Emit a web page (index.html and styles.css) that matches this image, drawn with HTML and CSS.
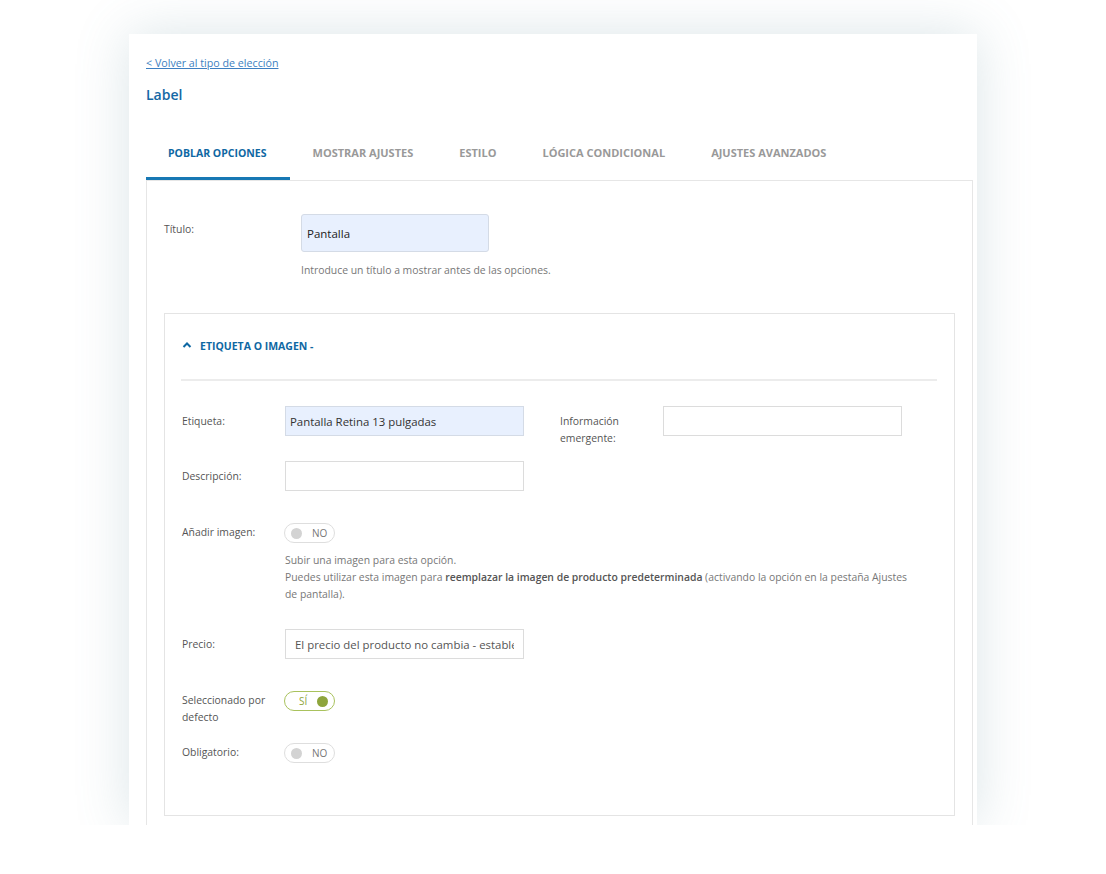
FILE: index.html
```html
<!DOCTYPE html>
<html lang="es">
<head>
    <meta charset="UTF-8">
    <title>Label | Poblar opciones</title>
    <link rel="stylesheet" href="styles.css">
</head>
<body>

<div class="page">
    <div class="card">
        <a class="back-link" href="#">&lt; Volver al tipo de elección</a>
        <h1 class="title">Label</h1>

        <div class="tabs">
            <a class="tab active" href="#">Poblar opciones</a>
            <a class="tab" href="#">Mostrar ajustes</a>
            <a class="tab" href="#">Estilo</a>
            <a class="tab" href="#">Lógica condicional</a>
            <a class="tab" href="#">Ajustes avanzados</a>
        </div>

        <div class="panel">
            <div class="title-row">
                <label class="title-label">Título:</label>
                <div>
                    <input class="title-input" type="text" value="Pantalla">
                    <p class="help">Introduce un título a mostrar antes de las opciones.</p>
                </div>
            </div>

            <div class="option">
                <div class="option-head">
                    <svg class="chevron" width="10" height="8" viewBox="0 0 10 8">
                        <polyline points="1.5,6 5,2.5 8.5,6" fill="none" stroke="#0f68a3" stroke-width="2"/>
                    </svg>
                    <span>Etiqueta o imagen -</span>
                </div>

                <div class="fields">
                    <div class="row first-row">
                        <label class="field-label">Etiqueta:</label>
                        <input class="field-input filled" type="text" value="Pantalla Retina 13 pulgadas">
                        <label class="field-label side">Información emergente:</label>
                        <input class="field-input" type="text">
                    </div>

                    <div class="row desc-row">
                        <label class="field-label">Descripción:</label>
                        <input class="field-input" type="text">
                    </div>

                    <div class="row toggle-row">
                        <label class="field-label">Añadir imagen:</label>
                        <div>
                            <span class="toggle off"><i></i>NO</span>
                            <p class="help wide">Subir una imagen para esta opción.<br>
                                Puedes utilizar esta imagen para <b>reemplazar la imagen de producto predeterminada</b> (activando la opción en la pestaña Ajustes de pantalla).</p>
                        </div>
                    </div>

                    <div class="row price-row">
                        <label class="field-label">Precio:</label>
                        <input class="field-input" type="text" value="El precio del producto no cambia - establecer un precio">
                    </div>

                    <div class="row toggle-row default-row">
                        <label class="field-label">Seleccionado por defecto</label>
                        <span class="toggle on">SÍ<i></i></span>
                    </div>

                    <div class="row toggle-row required-row">
                        <label class="field-label">Obligatorio:</label>
                        <span class="toggle off"><i></i>NO</span>
                    </div>
                </div>
            </div>
        </div>
    </div>
</div>

</body>
</html>
```

FILE: styles.css
```css
body {
    margin: 0;
    background-color: #fff;
    font-family: 'Open Sans', sans-serif;
    font-size: 10.4px;
    color: #555;
}
.page {
    padding: 34px 0 0 129px;
}
.card {
    width: 848px;
    height: 791px;
    box-sizing: border-box;
    padding: 21px 4px 0 17px;
    overflow: hidden;
    background-color: #fff;
    box-shadow: 0 0 50px rgba(105, 145, 160, 0.24);
}
.back-link {
    display: inline-block;
    line-height: 16px;
    font-size: 10.7px;
    color: #3d7fc1;
    text-decoration: underline;
}
.title {
    margin: 14px 0 0;
    font-size: 14px;
    font-weight: 600;
    line-height: 20px;
    color: #1468a5;
}

/* tabs */
.tabs {
    display: flex;
    margin-top: 23px;
}
.tab {
    padding: 17px 23px 16px;
    line-height: 16px;
    font-size: 11px;
    font-weight: 700;
    text-transform: uppercase;
    text-decoration: none;
    color: #999;
    border-bottom: 3px solid transparent;
}
.tab.active {
    padding: 17px 23px 16px 22px;
    font-size: 10.5px;
    color: #0f68a3;
    border-bottom-color: #1778b4;
}
.panel {
    border: 1px solid #e6e6e6;
    padding: 33px 17px 0;
    min-height: 700px;
}

/* title row */
.title-row {
    display: flex;
}
.title-label {
    width: 137px;
    padding-top: 7px;
    line-height: 17px;
}
.title-input {
    display: block;
    width: 188px;
    height: 38px;
    box-sizing: border-box;
    padding: 0 5px;
    border: 1px solid #d4dbe6;
    border-radius: 3px;
    background-color: #e8f0fe;
    font-family: inherit;
    font-size: 11.5px;
    color: #222;
}
.help {
    margin: 10px 0 0;
    line-height: 17px;
    color: #777;
}
.help b {
    font-weight: 600;
    color: #555;
}

/* option box */
.option {
    margin-top: 34px;
    border: 1px solid #e4e4e4;
    padding: 0 17px 52px 16px;
}
.option-head {
    display: flex;
    align-items: center;
    gap: 8px;
    padding: 24px 0 25px 1px;
    border-bottom: 2px solid #ececec;
    line-height: 16px;
    font-size: 10.5px;
    font-weight: 700;
    text-transform: uppercase;
    color: #0f68a3;
}
.chevron {
    margin-top: -2px;
}
.fields {
    padding-top: 25px;
}
.row {
    display: flex;
    align-items: flex-start;
    margin-bottom: 25px;
}
.first-row {
    height: 30px;
}
.desc-row {
    margin-bottom: 32px;
}
.field-label {
    width: 103px;
    padding: 7px 0 0 1px;
    line-height: 17px;
}
.field-label.side {
    width: 103px;
    margin-left: 36px;
    padding-left: 0;
}
.field-input {
    width: 239px;
    height: 30px;
    box-sizing: border-box;
    padding: 0 4px;
    border: 1px solid #dcdcdc;
    background-color: #fff;
    font-family: inherit;
    font-size: 11.4px;
    color: #333;
}
.field-input.filled {
    background-color: #e8f0fe;
    border-color: #d4dbe6;
}
.price-row .field-input {
    padding: 0 9px;
    color: #555;
}
.toggle-row .field-label {
    padding-top: 1px;
}
.toggle-row {
    margin-bottom: 10px;
}
.help.wide {
    margin-top: 9px;
    width: 630px;
}
.price-row {
    margin-top: 26px;
    margin-bottom: 32px;
}
.default-row {
    margin-bottom: 17px;
}
.default-row .field-label {
    width: 100px;
    padding-right: 3px;
}
.required-row {
    margin-bottom: 0;
}

/* toggles */
.toggle {
    display: flex;
    align-items: center;
    width: 51px;
    height: 20px;
    box-sizing: border-box;
    margin-left: -1px;
    border: 1px solid #dedede;
    border-radius: 10px;
    font-size: 10px;
}
.toggle i {
    width: 11px;
    height: 11px;
    border-radius: 50%;
}
.toggle.off {
    padding-left: 6px;
    gap: 10px;
    color: #777;
}
.toggle.off i {
    background-color: #d3d3d3;
}
.toggle.on {
    padding-left: 14px;
    gap: 10px;
    border-color: #a9c25d;
    color: #8ea53c;
}
.toggle.on i {
    background-color: #8ea53c;
}
```
